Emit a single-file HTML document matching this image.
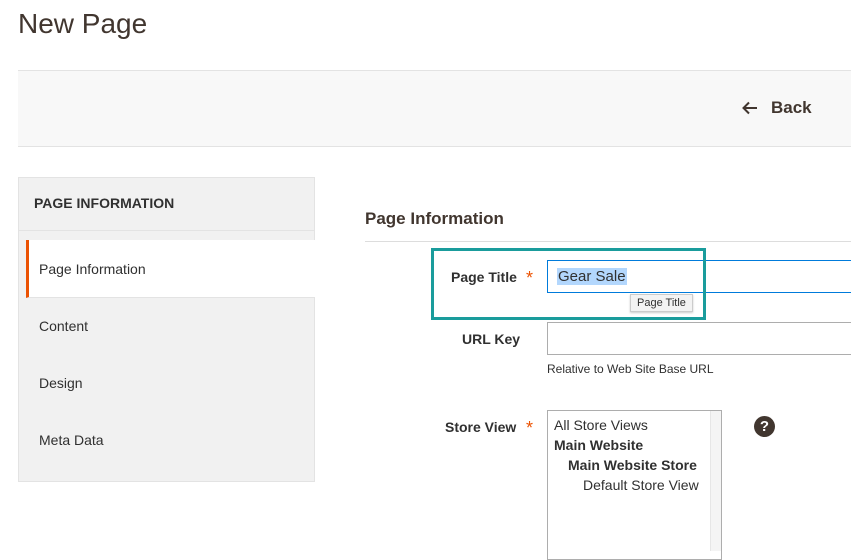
<!DOCTYPE html>
<html><head><style>
body{margin:0;width:851px;height:545px;overflow:hidden;background:#fff;font-family:"Liberation Sans",sans-serif;color:#303030;position:relative}
div,span{position:absolute;box-sizing:border-box}
.t{white-space:nowrap}
</style></head><body>
<div class="t" style="left:18px;top:8px;font-size:28px;color:#41362f">New Page</div>
<div style="left:18px;top:70px;width:833px;height:77px;background:#f8f8f8;border-top:1px solid #e3e3e3;border-bottom:1px solid #e3e3e3"></div>
<svg style="position:absolute;left:742px;top:101px" width="16" height="14" viewBox="0 0 16 14"><path d="M15 7H2M7 1.5L1.5 7L7 12.5" fill="none" stroke="#41362f" stroke-width="2"/></svg>
<div class="t" style="left:771px;top:98px;font-size:17px;font-weight:bold;color:#41362f">Back</div>

<div style="left:18px;top:177px;width:297px;height:305px;background:#f1f1f1;border:1px solid #e3e3e3"></div>
<div class="t" style="left:34px;top:195px;font-size:14px;font-weight:bold;color:#303030">PAGE INFORMATION</div>
<div style="left:18px;top:230px;width:297px;height:1px;background:#e3e3e3"></div>
<div style="left:26px;top:240px;width:289px;height:58px;background:#fff;border-left:3px solid #eb5202;border-bottom:1px solid #e3e3e3"></div>
<div class="t" style="left:39px;top:261px;font-size:14px">Page Information</div>
<div class="t" style="left:39px;top:318px;font-size:14px">Content</div>
<div class="t" style="left:39px;top:375px;font-size:14px">Design</div>
<div class="t" style="left:39px;top:432px;font-size:14px">Meta Data</div>

<div class="t" style="left:365px;top:209px;font-size:17px;font-weight:bold;color:#41362f">Page Information</div>
<div style="left:365px;top:241px;width:486px;height:1px;background:#ddd"></div>

<div class="t" style="left:451px;top:269px;font-size:14px;font-weight:bold">Page Title</div>
<div class="t" style="left:526px;top:268px;font-size:18px;color:#eb5202">*</div>
<div style="left:547px;top:260px;width:310px;height:33px;border:1px solid #007bdb;background:#fff"></div>
<div class="t" style="left:557px;top:268px;font-size:15px;background:#b3d7fd;padding:0 1px">Gear Sale</div>
<div class="t" style="left:630px;top:294px;font-size:11px;padding:2px 6px;background:#f3f3f3;border:1px solid #ccc;box-shadow:0 1px 2px rgba(0,0,0,.2)">Page Title</div>
<div style="left:431px;top:248px;width:275px;height:72px;border:3px solid #1a9c9c"></div>

<div class="t" style="left:462px;top:331px;font-size:14px;font-weight:bold">URL Key</div>
<div style="left:547px;top:322px;width:310px;height:33px;border:1px solid #adadad"></div>
<div class="t" style="left:547px;top:362px;font-size:12px">Relative to Web Site Base URL</div>

<div class="t" style="left:445px;top:419px;font-size:14px;font-weight:bold">Store View</div>
<div class="t" style="left:526px;top:418px;font-size:18px;color:#eb5202">*</div>
<div style="left:547px;top:410px;width:175px;height:150px;border:1px solid #adadad"></div>
<div style="left:710px;top:411px;width:11px;height:140px;background:#f4f4f4;border-left:1px solid #e6e6e6"></div>
<div class="t" style="left:554px;top:417px;font-size:14px">All Store Views</div>
<div class="t" style="left:554px;top:437px;font-size:14px;font-weight:bold">Main Website</div>
<div class="t" style="left:568px;top:457px;font-size:14px;font-weight:bold">Main Website Store</div>
<div class="t" style="left:583px;top:477px;font-size:14px">Default Store View</div>
<div style="left:754px;top:416px;width:21px;height:21px;border-radius:50%;background:#41362f;color:#fff;font-weight:bold;font-size:15px;text-align:center;line-height:21px">?</div>
</body></html>
